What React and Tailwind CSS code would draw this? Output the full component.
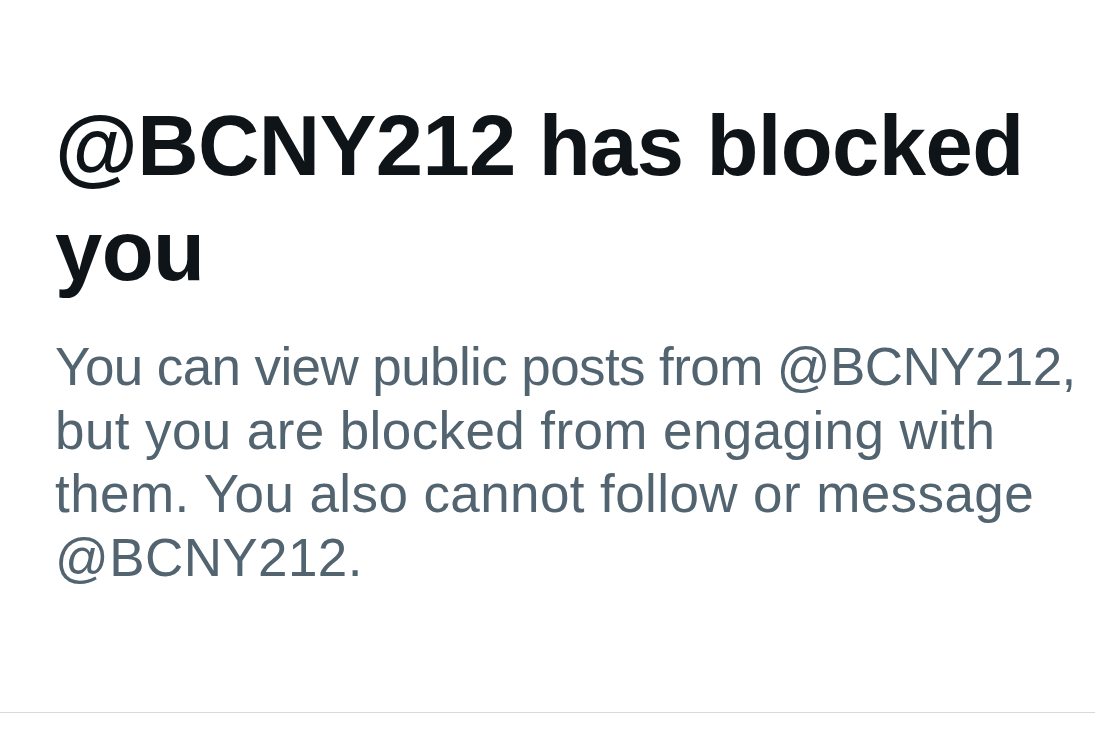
export default function App() {
  return (
    <div className="w-[1095px] h-[740px] overflow-hidden bg-white flex flex-col" style={{ fontFamily: '"Liberation Sans", Arial, sans-serif' }}>
      <div className="flex-1 pl-[55px] pt-[93px]">
        <h1 className="text-[85px] leading-[105px] font-bold tracking-[-0.6px] text-[#0f1419] whitespace-nowrap">
          @BCNY212 has blocked
          <br />
          you
        </h1>
        <p className="mt-[32px] text-[53px] leading-[63.5px] tracking-[0.4px] text-[#536471] whitespace-nowrap">
          <span className="tracking-[-0.6px]">You can view public posts from @BCNY212,</span>
          <br />
          but you are blocked from engaging with
          <br />
          them. You also cannot follow or message
          <br />
          @BCNY212.
        </p>
      </div>
      <div className="h-[28px] border-t border-[#d9d9d9] shrink-0" />
    </div>
  )
}
